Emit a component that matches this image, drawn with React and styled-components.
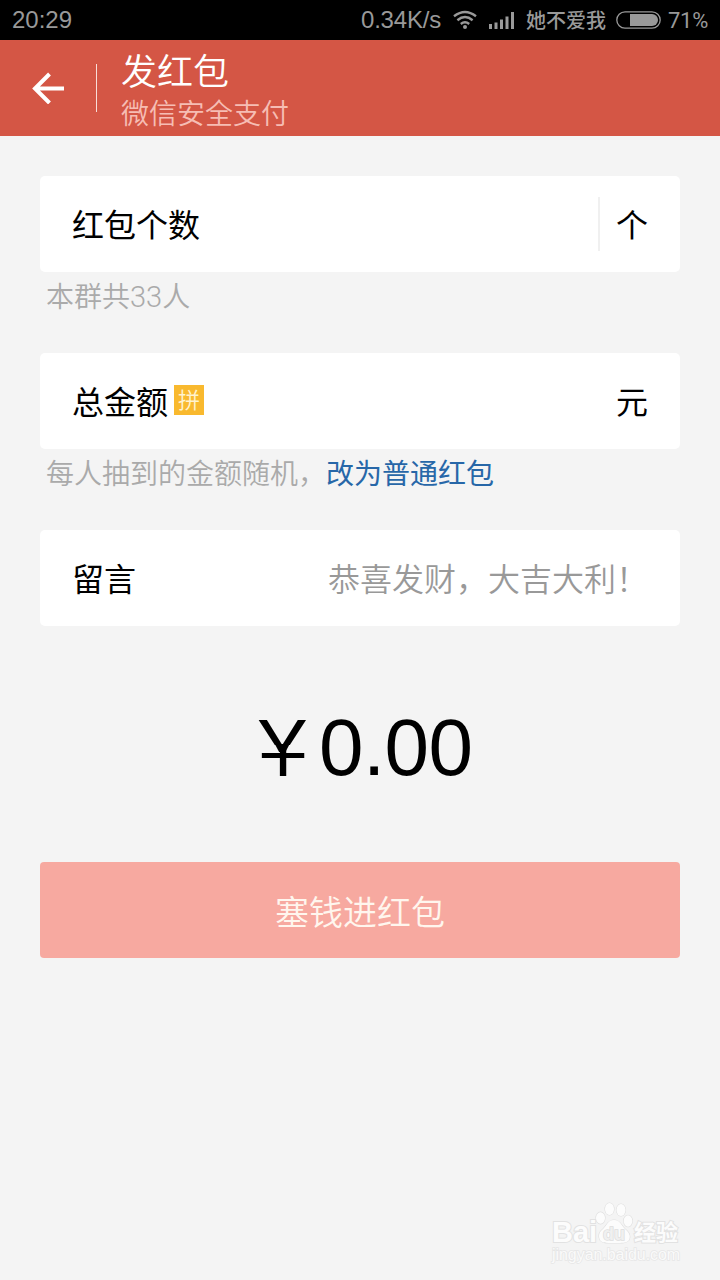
import styled, { createGlobalStyle } from "styled-components";

const GlobalStyle = createGlobalStyle`
  * {
    box-sizing: border-box;
  }

  body {
    margin: 0;
    background-color: #f4f4f4;
    font-family: "Liberation Sans", "Noto Sans CJK SC", sans-serif;
  }
`;

const Screen = styled.div`
  display: flex;
  flex-direction: column;
  width: 720px;
  height: 1280px;
  overflow: hidden;
  background-color: #f4f4f4;
`;

const StatusBar = styled.div`
  display: flex;
  align-items: center;
  justify-content: space-between;
  height: 40px;
  padding: 0 12px;
  background-color: #000;
  color: #999;
  font-size: 24px;
  line-height: 40px;
  white-space: nowrap;
`;

const StatusGroup = styled.div`
  display: flex;
  align-items: center;
`;

const Speed = styled.span`
  width: 80px;
  margin-right: 12px;
  letter-spacing: -0.2px;
`;

const Carrier = styled.span`
  margin: 0 10px 0 11px;
  padding-top: 2px;
  font-size: 20px;
  font-weight: 500;
`;

const Percent = styled.span`
  width: 40px;
  margin-left: 7px;
  padding-top: 1px;
  font-family: Roboto, sans-serif;
  font-size: 22px;
  letter-spacing: -0.3px;
`;

const Header = styled.header`
  display: flex;
  align-items: center;
  height: 96px;
  padding-left: 32px;
  background-color: #d45645;
`;

const HeaderLine = styled.div`
  width: 1px;
  height: 48px;
  margin: 0 24px 0 32px;
  background-color: #f9ddd8;
`;

const Title = styled.h1`
  margin: 7px 0 0;
  color: #fff;
  font-size: 36px;
  font-weight: 350;
  line-height: 50px;
`;

const Subtitle = styled.p`
  margin: -3px 0 0;
  color: #f6bdb4;
  font-size: 28px;
  font-weight: 350;
  line-height: 40px;
`;

const Form = styled.main`
  display: flex;
  flex-direction: column;
  padding: 40px 40px 0;
`;

const Card = styled.div`
  display: flex;
  align-items: center;
  height: 96px;
  padding: 0 32px;
  border-radius: 5px;
  background-color: #fff;
  color: #000;
  font-size: 32px;
  line-height: 48px;
`;

const Label = styled.span`
  padding-top: 4px;
`;

const Tag = styled.span`
  width: 30px;
  height: 30px;
  margin: 0 auto 2px 6px;
  background-color: #f9b92e;
  color: #fff3cf;
  font-size: 22px;
  font-weight: 350;
  line-height: 32px;
  text-align: center;
`;

const UnitLine = styled.div`
  width: 2px;
  height: 54px;
  margin: 0 16px 0 auto;
  background-color: #f0f0f0;
`;

const Message = styled.span`
  margin-left: auto;
  padding-top: 4px;
  color: #999;
  font-weight: 350;
`;

const Hint = styled.p`
  height: 81px;
  margin: 0;
  padding: 6px 6px 0;
  color: #aaa;
  font-family: Roboto, "Noto Sans CJK SC", sans-serif;
  font-size: 28px;
  font-weight: 350;
  line-height: 40px;
`;

const Count = styled.span`
  font-size: 29px;
  line-height: 1;
`;

const Link = styled.a`
  color: #2767a8;
  font-weight: 400;
`;

const Amount = styled.div`
  display: flex;
  justify-content: center;
  height: 236px;
  padding-left: 13px;
  font-size: 80px;
  line-height: 244px;
`;

/* the sign has a single crossbar, so the lower half of the glyph is repainted */
const Yen = styled.span`
  position: relative;
  height: 236px;
  margin-right: 14px;
  transform: scaleX(1.06);

  &::before {
    content: "";
    position: absolute;
    z-index: 1;
    top: 118px;
    left: 50%;
    width: 14px;
    height: 8px;
    margin-left: -7px;
    background-color: #000;
    clip-path: polygon(0 0, 100% 0, 10px 100%, 4px 100%);
  }

  &::after {
    content: "";
    position: absolute;
    top: 119px;
    left: -1px;
    width: 47px;
    height: 32px;
    background:
      linear-gradient(#000, #000) center 4px / 6px 27px no-repeat,
      linear-gradient(#000, #000) center 8px / 40px 5px no-repeat,
      #f4f4f4;
  }
`;

const Digits = styled.span`
  letter-spacing: -0.5px;
`;

const SubmitButton = styled.button`
  height: 96px;
  padding: 5px 0 0;
  border: none;
  border-radius: 4px;
  background-color: #f7a9a0;
  color: #fff6ee;
  font-family: inherit;
  font-size: 34px;
  font-weight: 350;
  line-height: 48px;
`;

const Watermark = styled.footer`
  display: flex;
  flex-direction: column;
  align-self: flex-end;
  width: 130px;
  margin: auto 38px 14px 0;
  color: #fcfcfc;
  -webkit-text-stroke: 2px #e2e2e2;
  paint-order: stroke fill;
`;

const Brand = styled.div`
  display: flex;
  align-items: flex-end;
  height: 46px;
  font-size: 29px;
  font-weight: bold;
  line-height: 32px;
`;

const BrandName = styled.span`
  width: 43px;
  margin-bottom: -4px;
`;

const BrandSuffix = styled.span`
  margin: 0 0 -5px 1px;
  font-size: 22px;
  line-height: 32px;
`;

const Site = styled.span`
  font-size: 16px;
  line-height: 22px;
  letter-spacing: -0.05px;
  color: #fafafa;
  -webkit-text-stroke: 1.5px #e6e6e6;
`;

const WifiIcon = () => (
  <svg width="24" height="20" viewBox="0 0 24 20" fill="none" stroke="#999" strokeWidth="2.4">
    <path d="M1 6.2Q12-2.4 23 6.2M4.4 10.2Q12 4 19.6 10.2M7.8 14Q12 10.6 16.2 14" />
    <circle cx="12" cy="17" r="2" fill="#999" stroke="none" />
  </svg>
);

const SignalSvg = styled.svg`
  margin-left: 12px;
`;

const SignalIcon = () => (
  <SignalSvg width="26" height="17" viewBox="0 0 26 17" fill="#999">
    <path d="M0 12h3v5H0zM5.5 10.5h3V17h-3zM11 7.5h3V17h-3zM16.5 4.5h3V17h-3zM22 0h3v17h-3z" />
  </SignalSvg>
);

const BatteryIcon = () => (
  <svg width="45" height="18" viewBox="0 0 45 18">
    <rect x="0.8" y="0.8" width="43.4" height="16.4" rx="8.2" fill="none" stroke="#999" strokeWidth="1.3" />
    <path d="M14 3h22a6 6 0 0 1 0 12H14z" fill="#999" />
  </svg>
);

const BackIcon = () => (
  <svg width="32" height="32" viewBox="0 0 32 32" fill="none" stroke="#fff" strokeWidth="4">
    <path d="M32 16.5H3M17.5 2L3 16.5 17.5 31" />
  </svg>
);

const PawIcon = () => (
  <svg width="38" height="42" viewBox="0 0 38 42" fill="#fcfcfc" stroke="#e0e0e0" strokeWidth="1.2">
    <ellipse cx="5.5" cy="16" rx="4.5" ry="5.8" />
    <ellipse cx="14.5" cy="7" rx="4.5" ry="6" />
    <ellipse cx="26" cy="8" rx="4.5" ry="6" />
    <ellipse cx="33" cy="19" rx="4.3" ry="5.7" />
    <path d="M19 18c-6 0-7 5-11 9-4 3-5 7-3 11 2 3 6 3 14 3s13 0 15-3c2-4 0-8-4-11-4-4-5-9-11-9z" />
    <text x="19" y="38" textAnchor="middle" fontSize="18" fontWeight="bold" fill="#f0f0f0" stroke="#dedede" strokeWidth="1.5">
      du
    </text>
  </svg>
);

const App = () => {
  return (
    <Screen>
      <GlobalStyle />
      <StatusBar>
        <span>20:29</span>
        <StatusGroup>
          <Speed>0.34K/s</Speed>
          <WifiIcon />
          <SignalIcon />
          <Carrier>她不爱我</Carrier>
          <BatteryIcon />
          <Percent>71%</Percent>
        </StatusGroup>
      </StatusBar>
      <Header>
        <BackIcon />
        <HeaderLine />
        <div>
          <Title>发红包</Title>
          <Subtitle>微信安全支付</Subtitle>
        </div>
      </Header>
      <Form>
        <Card>
          <Label>红包个数</Label>
          <UnitLine />
          <Label>个</Label>
        </Card>
        <Hint>
          本群共<Count>33</Count>人
        </Hint>
        <Card>
          <Label>总金额</Label>
          <Tag>拼</Tag>
          <Label>元</Label>
        </Card>
        <Hint>
          每人抽到的金额随机，<Link>改为普通红包</Link>
        </Hint>
        <Card>
          <Label>留言</Label>
          <Message>恭喜发财，大吉大利！</Message>
        </Card>
        <Amount>
          <Yen>¥</Yen>
          <Digits>0.00</Digits>
        </Amount>
        <SubmitButton>塞钱进红包</SubmitButton>
      </Form>
      <Watermark>
        <Brand>
          <BrandName>Bai</BrandName>
          <PawIcon />
          <BrandSuffix>经验</BrandSuffix>
        </Brand>
        <Site>jingyan.baidu.com</Site>
      </Watermark>
    </Screen>
  );
};

export default App;
